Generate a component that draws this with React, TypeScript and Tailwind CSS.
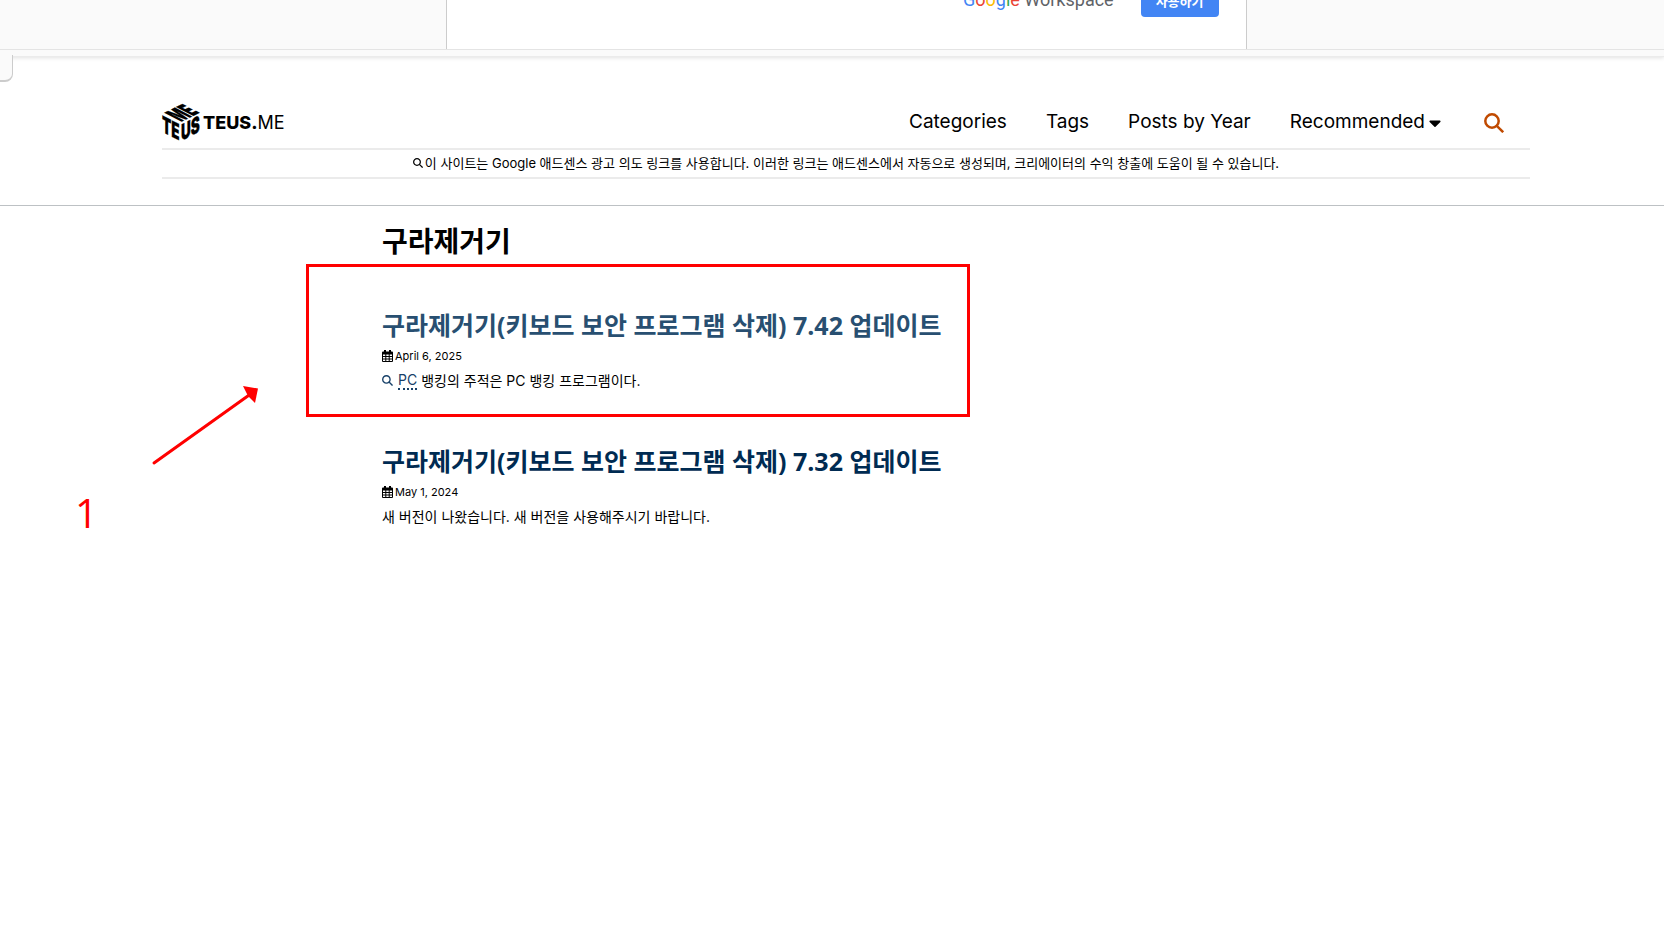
import { FaCaretDown } from "react-icons/fa";

type Post = {
  title: string;
  date: string;
  excerpt: string;
  keyword?: string;
  visited?: boolean;
};

const navLinks = ["Categories", "Tags", "Posts by Year"];

const posts: Post[] = [
  {
    title: "구라제거기(키보드 보안 프로그램 삭제) 7.42 업데이트",
    date: "April 6, 2025",
    keyword: "PC",
    excerpt: "뱅킹의 주적은 PC 뱅킹 프로그램이다.",
    visited: true,
  },
  {
    title: "구라제거기(키보드 보안 프로그램 삭제) 7.32 업데이트",
    date: "May 1, 2024",
    excerpt: "새 버전이 나왔습니다. 새 버전을 사용해주시기 바랍니다.",
  },
];

function SearchIcon({ className }: { className?: string }) {
  return (
    <svg viewBox="0 0 20 20" fill="none" stroke="currentColor" strokeWidth="2.5" className={className} aria-hidden="true">
      <circle cx="8" cy="8" r="6.7" />
      <path d="M12.8 12.8 19.2 19.2" />
    </svg>
  );
}

function CalendarIcon({ className }: { className?: string }) {
  return (
    <svg viewBox="0 0 11 12" fill="currentColor" className={className} aria-hidden="true">
      <path d="M2 0h2v1.5h3V0h2v1.5h1a1 1 0 0 1 1 1V11a1 1 0 0 1-1 1H1a1 1 0 0 1-1-1V2.500a1 1 0 0 1 1-1h1z" />
      <path
        d="M1 4.500h2.300v1.500H1zM4.300 4.500h2.400v1.500H4.300zM7.700 4.500H10v1.500H7.700zM1 7h2.300v1.500H1zM4.300 7h2.400v1.500H4.300zM7.700 7H10v1.500H7.700zM1 9.500h2.300V11H1zM4.300 9.500h2.400V11H4.300zM7.700 9.500H10V11H7.700z"
        fill="#fff"
      />
    </svg>
  );
}

// Isometric cube with a pair of letters on each face
function CubeLogo() {
  return (
    <svg viewBox="0 0 38 38" className="h-[39px] w-[39px] overflow-visible" aria-hidden="true">
      <g fontFamily="Inter, sans-serif" fontWeight="900" fontSize="22" fill="#000" stroke="#000" strokeWidth="0.3">
        <text transform="matrix(0.6 0.3 0 1 0 28)">TE</text>
        <text transform="matrix(0.6 -0.3 0 1 18.5 37)">US</text>
        <text transform="matrix(0.54 -0.27 1.05 0.54 18.5 18.5)">ME</text>
      </g>
    </svg>
  );
}

function AdBanner() {
  return (
    <div className="relative border-b border-[#ebebeb] bg-[#fafafa] pb-1.5 shadow-[0_1px_4px_rgba(0,0,0,0.12)]">
      <div className="h-[50px] overflow-hidden border-b border-[#e4e4e4] pl-7">
        <div className="mx-auto flex h-[50px] w-full max-w-[801px] items-end justify-end gap-[27px] border border-t-0 border-[#cccccc] bg-white pr-[27px] pb-8">
          <p className="pb-0.5 font-[Roboto,sans-serif] text-lg leading-[30px] text-[#5f6368]">
            <span className="text-[#4285f4]">G</span>
            <span className="text-[#ea4335]">o</span>
            <span className="text-[#fbbc04]">o</span>
            <span className="text-[#4285f4]">g</span>
            <span className="text-[#34a853]">l</span>
            <span className="text-[#ea4335]">e</span> Workspace
          </p>
          <button type="button" className="h-[30px] shrink-0 rounded bg-[#4285f4] px-[15px] text-[13px] font-bold text-white">
            사용하기
          </button>
        </div>
      </div>
      <div className="absolute top-[calc(100%-1px)] left-0 h-[27px] w-[13px] rounded-br-lg border-r border-b-2 border-[#cccccc] bg-[#fafafa]" />
    </div>
  );
}

function Masthead() {
  return (
    <header className="border-b border-[#bdc1c4] pt-10 pr-[134px] pb-[26px] pl-[162px]">
      <div className="flex h-[51px] items-center">
        <a href="#" className="flex items-center gap-0.5 text-lg text-black">
          <CubeLogo />
          <span>
            <b className="font-extrabold">TEUS.</b>ME
          </span>
        </a>
        <nav className="ml-auto flex items-center gap-[39px] pr-[26px] text-[19px] text-black">
          {navLinks.map((label) => (
            <a key={label} href="#">
              {label}
            </a>
          ))}
          <a href="#" className="mr-1 flex items-center gap-1">
            Recommended
            <FaCaretDown className="h-5 w-3" />
          </a>
          <button type="button" aria-label="Search" className="text-[#c04a00]">
            <SearchIcon className="h-5 w-5" />
          </button>
        </nav>
      </div>
      <p className="flex items-center justify-center border-y-2 border-[#ebebeb] text-[13px] leading-[27px] text-black">
        <SearchIcon className="mr-0.5 mb-0.5 h-2.5 w-2.5" />
        이 사이트는 Google 애드센스 광고 의도 링크를 사용합니다. 이러한 링크는 애드센스에서 자동으로 생성되며, 크리에이터의 수익 창출에 도움이 될 수 있습니다.
      </p>
    </header>
  );
}

function PostItem({ post }: { post: Post }) {
  return (
    <article>
      <h2
        className={`font-['Open_Sans','Noto_Sans_CJK_KR',sans-serif] text-[25px] leading-8 font-bold ${
          post.visited ? "text-[#284f71]" : "text-[#002b52]"
        }`}
      >
        <a href="#">{post.title}</a>
      </h2>
      <p className="mt-[7px] flex items-center gap-0.5 text-[11px] leading-4 text-black">
        <CalendarIcon className="h-3 w-[11px]" />
        {post.date}
      </p>
      <p className="mt-[5px] text-sm leading-6 text-black">
        {post.keyword && (
          <a href="#" className="mr-1 inline-flex items-center gap-[5px] text-[#174068]">
            <SearchIcon className="h-[11px] w-[11px]" />
            <span className="border-b-2 border-dotted border-[#174068] leading-4">{post.keyword}</span>
          </a>
        )}
        {post.excerpt}
      </p>
    </article>
  );
}

// Red marks laid over the page: a frame round the newest post, an arrow and a step number
function Annotations() {
  return (
    <div className="pointer-events-none absolute inset-0 text-[#ff0000]">
      <div className="absolute top-[264px] left-[306px] h-[153px] w-[664px] border-3 border-[#ff0000]" />
      <svg className="absolute top-[380px] left-[150px]" width="112" height="88" aria-hidden="true">
        <path d="M4 83 102 13" stroke="currentColor" strokeWidth="3" strokeLinecap="round" />
        <path d="M108 8.500 93 6l5 10 7 7z" fill="currentColor" />
      </svg>
      <span className="absolute top-[488px] left-[75px] font-['Open_Sans',sans-serif] text-[40px] leading-[50px]">1</span>
    </div>
  );
}

export default function App() {
  return (
    <div className="relative min-h-screen bg-white font-[Inter,'Noto_Sans_CJK_KR',sans-serif]">
      <AdBanner />
      <Masthead />
      <main className="pt-4 pl-[382px]">
        <h1 className="text-[28px] leading-10 font-bold text-black">구라제거기</h1>
        <div className="mt-[47px] flex flex-col gap-[52px]">
          {posts.map((post) => (
            <PostItem key={post.title} post={post} />
          ))}
        </div>
      </main>
      <Annotations />
    </div>
  );
}
